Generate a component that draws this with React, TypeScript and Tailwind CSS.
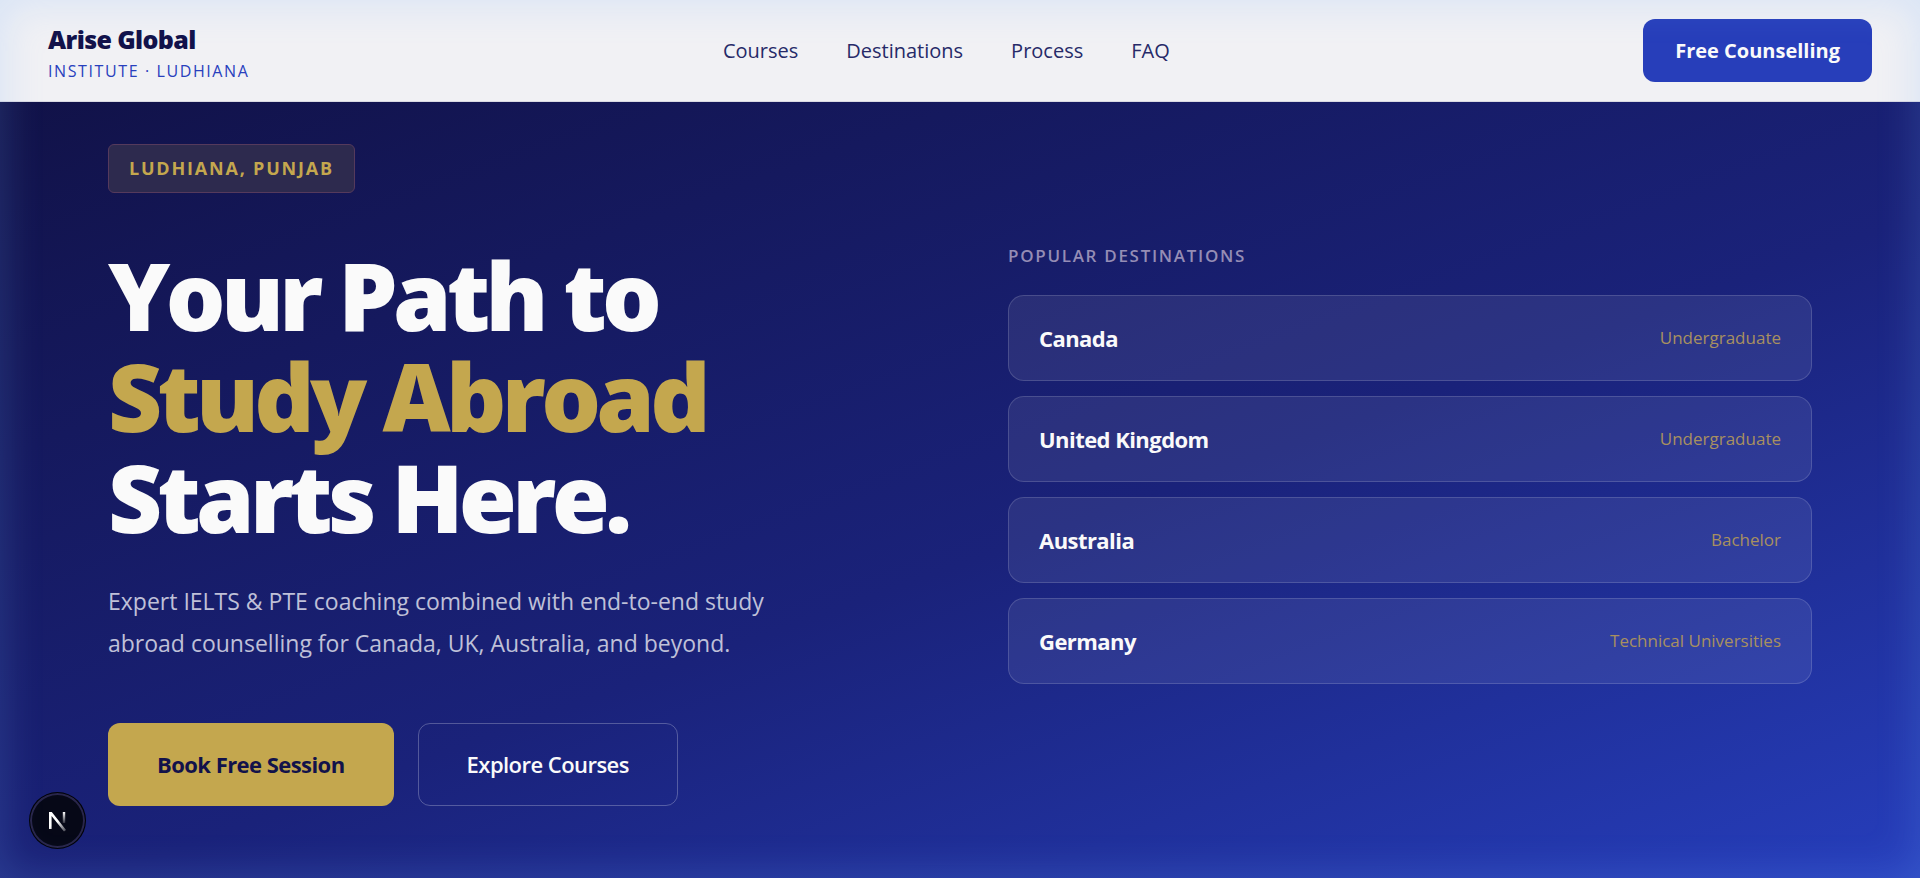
const navLinks = [
  { label: "Courses", href: "#courses" },
  { label: "Destinations", href: "#destinations" },
  { label: "Process", href: "#process" },
  { label: "FAQ", href: "#faq" },
];

const destinations = [
  { country: "Canada", level: "Undergraduate" },
  { country: "United Kingdom", level: "Undergraduate" },
  { country: "Australia", level: "Bachelor" },
  { country: "Germany", level: "Technical Universities" },
];

function Header() {
  return (
    <header className="flex items-center justify-between border-b border-[#d9d9e2] bg-[#f1f1f4] px-12 py-[19px]">
      <a href="#top" className="flex flex-col gap-2 pt-1">
        <span className="text-[25px] leading-7 font-extrabold tracking-tight text-[#12124a]">Arise Global</span>
        <span className="text-base leading-5 tracking-widest text-[#2840bd] uppercase">Institute · Ludhiana</span>
      </a>
      <nav className="flex gap-12">
        {navLinks.map((link) => (
          <a key={link.label} href={link.href} className="text-xl font-medium text-[#262a68]">
            {link.label}
          </a>
        ))}
      </nav>
      <button type="button" className="h-[63px] rounded-xl bg-[#273eba] px-8 text-xl font-bold text-[#fafafa]">
        Free Counselling
      </button>
    </header>
  );
}

function Hero() {
  return (
    <section className="grid flex-1 grid-cols-2 items-center gap-24 px-27 pt-[42px] pb-[72px]">
      <div>
        <span className="inline-block rounded-md border border-[#553a5c] bg-[#2d2a4e] px-5 py-[9px] text-lg leading-[29px] font-bold tracking-widest text-[#c4a74e] uppercase">
          Ludhiana, Punjab
        </span>
        <h1 className="mt-[52px] text-[94px] leading-[101px] font-extrabold tracking-tighter text-[#fafafa]">
          Your Path to
          <span className="block text-[#c4a74e]">Study Abroad</span>
          Starts Here.
        </h1>
        <p className="mt-8 text-[23px] leading-[42px] text-[#bfc0d8]">
          Expert IELTS &amp; PTE coaching combined with end-to-end study
          <br />
          abroad counselling for Canada, UK, Australia, and beyond.
        </p>
        <div className="mt-[59px] flex gap-6">
          <button type="button" className="h-[83px] rounded-xl bg-[#c4a74e] px-[49px] text-[22px] font-bold tracking-tight text-[#12124a]">
            Book Free Session
          </button>
          <button type="button" className="h-[83px] rounded-xl border border-white/25 px-12 text-[22px] font-semibold tracking-tight text-[#fafafa]">
            Explore Courses
          </button>
        </div>
      </div>
      <div className="pb-[25px]">
        <h2 className="mb-6 text-[17px] leading-[30px] font-semibold tracking-widest text-[#958db5] uppercase">Popular Destinations</h2>
        <ul className="flex flex-col gap-[15px]">
          {destinations.map((d) => (
            <li key={d.country} className="flex h-[86px] items-center justify-between rounded-2xl border border-white/15 bg-white/8 px-[30px]">
              <span className="text-[22px] font-bold tracking-tight text-[#fafafa]">{d.country}</span>
              <span className="text-[17px] text-[#a89060]">{d.level}</span>
            </li>
          ))}
        </ul>
      </div>
    </section>
  );
}

function DevBadge() {
  return (
    <button type="button" aria-label="Open dev tools" className="fixed bottom-[29px] left-[29px] flex size-[57px] items-center justify-center rounded-full border border-black/70 bg-[#060817] shadow-[inset_0_0_0_2px_#29264b]">
      <svg className="size-6" viewBox="0 0 24 24" fill="none">
        <defs>
          <linearGradient id="stem" x1="18" y1="3" x2="18" y2="15" gradientUnits="userSpaceOnUse">
            <stop stopColor="#fff" />
            <stop offset="1" stopColor="#fff" stopOpacity="0.1" />
          </linearGradient>
          <linearGradient id="diag" x1="12" y1="12" x2="19" y2="22" gradientUnits="userSpaceOnUse">
            <stop stopColor="#fff" />
            <stop offset="1" stopColor="#fff" stopOpacity="0.3" />
          </linearGradient>
        </defs>
        <path d="M18 3V14" stroke="url(#stem)" strokeWidth="2.4" />
        <path d="M3 20V3H5.8L20 21L18 22.5L5.6 7V20Z" fill="url(#diag)" />
      </svg>
    </button>
  );
}

export default function App() {
  return (
    <div id="top" className="flex min-h-screen flex-col bg-[linear-gradient(160deg,#101042_0%,#1a227a_58%,#263ebc_100%)] font-['Open_Sans','Noto_Sans',sans-serif]">
      <Header />
      <Hero />
      <DevBadge />
      {/* soft glow around the window edge */}
      <div className="pointer-events-none fixed inset-0 shadow-[inset_0_0_40px_4px_rgba(115,175,255,0.2)]" />
    </div>
  );
}
